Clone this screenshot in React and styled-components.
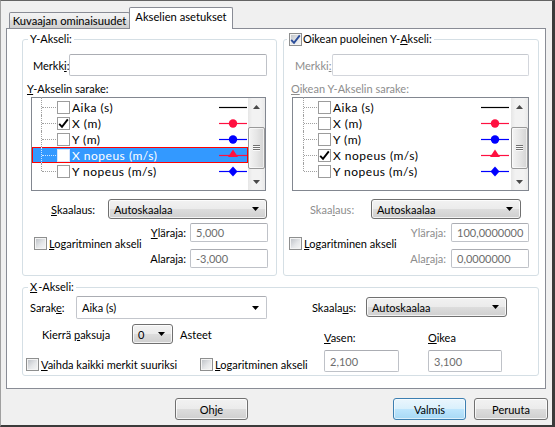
import React from 'react';
import styled, { createGlobalStyle, css } from 'styled-components';

const Global = createGlobalStyle`
  html, body { margin: 0; padding: 0; background: #f0f0f0; }
  body { font-family: Lato, "Liberation Sans", sans-serif; font-size: 11px; color: #000; }
  * { box-sizing: border-box; }
`;

const Window = styled.div`
  width: 555px;
  height: 427px;
  background: #f0f0f0;
  border-top: 1px solid #646464;
  border-left: 1px solid #a0a0a0;
  border-right: 3px solid #3b3b3b;
  border-bottom: 2px solid #3b3b3b;
  display: flex;
  flex-direction: column;
  overflow: hidden;
`;

const TabStrip = styled.div`
  height: 27px;
  display: flex;
  align-items: flex-end;
  padding-left: 8px;
`;

const Tab = styled.div`
  flex: none;
  width: ${p => p.$w}px;
  display: flex;
  justify-content: center;
  border: 1px solid #898c95;
  border-bottom: none;
  border-radius: 2px 2px 0 0;
  white-space: nowrap;
  font-size: 11.2px;
  ${p => p.$active
    ? css`
      height: 22px;
      margin-left: -1px;
      margin-bottom: -1px;
      padding-top: 2px;
      background: #fff;
      position: relative;
      z-index: 1;
    `
    : css`
      height: 16px;
      align-items: center;
      background: linear-gradient(#f3f3f3 0%, #ebebeb 50%, #dddddd 50%, #cfcfcf 100%);
    `}
`;

const Panel = styled.div`
  margin-left: 5px;
  width: 540px;
  height: 361px;
  border: 1px solid #898c95;
  background: #fff;
  padding: 3px 0 0 15px;
`;

const TopRow = styled.div`
  display: flex;
  gap: 6px;
`;

const Group = styled.fieldset`
  flex: none;
  width: ${p => p.$w}px;
  margin: ${p => p.$mt || 0}px 0 0;
  padding: 0 0 ${p => p.$pb || 0}px;
  border: 1px solid #d5dfe5;
  border-radius: 3px;
  min-width: 0;
`;

const Legend = styled.legend`
  margin-left: ${p => p.$ml}px;
  padding: 0 2px;
  height: 14px;
  line-height: 14px;
  display: flex;
  align-items: center;
  gap: 1px;
  white-space: nowrap;
`;

const U = styled.span`
  text-decoration: underline;
  text-underline-offset: 1px;
`;

const Row = styled.div`
  display: flex;
  align-items: center;
  height: ${p => p.$h}px;
  margin-top: ${p => p.$mt || 0}px;
  padding-right: ${p => p.$pr || 0}px;
`;

const Label = styled.span`
  flex: none;
  display: block;
  width: ${p => (p.$w ? `${p.$w}px` : 'auto')};
  margin-left: ${p => p.$ml || 0}px;
  margin-top: ${p => p.$mt || 0}px;
  color: ${p => (p.$disabled ? '#8d8d8d' : '#000')};
  text-align: ${p => (p.$right ? 'right' : 'left')};
  white-space: nowrap;
  line-height: 15px;
`;

const TextBox = styled.div`
  flex: ${p => (p.$w ? 'none' : '1')};
  width: ${p => (p.$w ? `${p.$w}px` : 'auto')};
  height: ${p => p.$h || 22}px;
  border: 1px solid ${p => (p.$disabled ? '#d3d6dc' : '#bfc2c8')};
  border-top-color: ${p => (p.$disabled ? '#c6c9cf' : '#abadb3')};
  border-radius: 2px;
  background: #fff;
  color: #6d6d6d;
  padding-left: 5px;
  display: flex;
  align-items: center;
  white-space: nowrap;
  overflow: hidden;
`;

const DropDown = styled.div`
  flex: none;
  width: ${p => p.$w}px;
  height: ${p => p.$h || 20}px;
  margin-left: ${p => p.$ml || 0}px;
  display: flex;
  align-items: center;
  justify-content: space-between;
  padding: 0 7px 0 5px;
  white-space: nowrap;
  ${p => p.$flat
    ? css`
      border: 1px solid #c3c6cc;
      border-top-color: #abadb3;
      border-radius: 2px;
      background: #fff;
    `
    : css`
      border: 1px solid #707070;
      border-radius: 3px;
      background: linear-gradient(#f2f2f2 0%, #ebebeb 50%, #dddddd 50%, #cfcfcf 100%);
      box-shadow: inset 0 0 0 1px rgba(255, 255, 255, 0.75);
    `}
`;

const Arrow = () => (
  <svg width="7" height="4" viewBox="0 0 7 4" style={{ flex: 'none' }}>
    <polygon points="0,0 7,0 3.5,4" fill="#000" />
  </svg>
);

const Box = styled.span`
  flex: none;
  width: 13px;
  height: 13px;
  display: inline-flex;
  align-items: center;
  justify-content: center;
  position: relative;
  ${p => p.$flat
    ? css`
      border: 1px solid ${p.$sel ? '#d6e6ff' : '#9c9c9c'};
      background: #fff;
    `
    : css`
      border: 1px solid #8e8f8f;
      background: linear-gradient(135deg, #b9bdc3 0%, #e4e6e8 55%, #f7f7f7 100%);
      box-shadow: inset 0 0 0 1px #f4f4f4;
    `}
`;

const Tick = ({ color }) => (
  <svg width="13" height="13" viewBox="0 0 13 13" style={{ position: 'absolute', left: -1, top: -1 }}>
    <path d="M2.2 6.8 L5 9.8 L10.8 2.4" fill="none" stroke={color} strokeWidth="1.9" strokeLinejoin="miter" />
  </svg>
);

const CheckBox = ({ checked, flat, sel, color = '#000' }) => (
  <Box $flat={flat} $sel={sel}>{checked && <Tick color={color} />}</Box>
);

const CheckLabel = styled.label`
  flex: none;
  display: flex;
  align-items: center;
  gap: 2px;
  width: ${p => (p.$w ? `${p.$w}px` : 'auto')};
  margin-left: ${p => p.$ml || 0}px;
  margin-top: ${p => p.$mt || 0}px;
  align-self: ${p => p.$self || 'auto'};
  white-space: nowrap;
  line-height: 15px;
`;

/* list box */
const ListBox = styled.div`
  width: ${p => p.$w}px;
  height: 94px;
  margin: 1px 0 0 ${p => p.$ml}px;
  border: 1px solid #828790;
  background: #fff;
  display: flex;
`;

const Items = styled.div`
  flex: 1;
  min-width: 0;
  display: flex;
  flex-direction: column;
  padding-top: 1px;
`;

const Item = styled.div`
  height: 16px;
  display: flex;
  align-items: center;
  white-space: nowrap;
  font-size: 12px;
  letter-spacing: 0.5px;
  ${p => p.$sel && css`
    background: #3399ff;
    color: #fff;
    outline: 1px solid #ff0000;
    outline-offset: -1px;
  `}
`;

const Stub = styled.span`
  flex: none;
  width: 25px;
  height: 16px;
  position: relative;
  &::before {
    content: '';
    position: absolute;
    left: ${p => p.$x}px;
    top: ${p => (p.$first ? -2 : 0)}px;
    height: ${p => (p.$last ? '8px' : p.$first ? '18px' : '16px')};
    border-left: 1px dotted ${p => (p.$sel ? '#cfe6ff' : '#a0a0a0')};
  }
  &::after {
    content: '';
    position: absolute;
    left: ${p => p.$x + 1}px;
    right: 1px;
    top: 8px;
    border-top: 1px dotted ${p => (p.$sel ? '#cfe6ff' : '#a0a0a0')};
  }
`;

const ItemText = styled.span`
  margin-left: 2px;
`;

const MarkerWrap = styled.span`
  margin-left: auto;
  margin-right: ${p => p.$mr}px;
  display: flex;
`;

const Marker = ({ color, shape }) => (
  <svg width="28" height="14" viewBox="0 0 28 14">
    <line x1="0" y1="7.5" x2="28" y2="7.5" stroke={color} strokeWidth="1.2" />
    {shape === 'circle' && <circle cx="14" cy="7.5" r="4.2" fill={color} />}
    {shape === 'tri' && <polygon points="14,1.5 19,9 9,9" fill={color} />}
    {shape === 'diamond' && <polygon points="14,2.5 18.5,7.5 14,12.5 9.5,7.5" fill={color} />}
  </svg>
);

const VScroll = styled.div`
  flex: none;
  width: 17px;
  display: flex;
  flex-direction: column;
  background: linear-gradient(90deg, #e6e6e6 0%, #f2f2f2 25%, #f2f2f2 75%, #e9e9e9 100%);
`;

const ScrollBtn = styled.div`
  flex: none;
  height: 17px;
  display: flex;
  align-items: center;
  justify-content: center;
`;

const Track = styled.div`
  flex: 1;
`;

const Thumb = styled.div`
  margin: 12px 0 0 0;
  height: 42px;
  border: 1px solid #9a9a9a;
  border-radius: 2px;
  background: linear-gradient(90deg, #f4f4f4 0%, #e6e6e6 50%, #d4d4d4 100%);
  box-shadow: inset 0 0 0 1px rgba(255, 255, 255, 0.6);
  display: flex;
  flex-direction: column;
  align-items: center;
  justify-content: center;
  gap: 0;
`;

const Grip = styled.span`
  width: 7px;
  height: 2px;
  border-top: 1px solid #707070;
  border-bottom: 1px solid #fafafa;
`;

const ScrollArrow = ({ up }) => (
  <svg width="7" height="4" viewBox="0 0 7 4">
    <polygon points={up ? '0,4 7,4 3.5,0' : '0,0 7,0 3.5,4'} fill="#4a4a4a" />
  </svg>
);

const RED = '#ff1040';
const BLUE = '#0000ff';

const ITEMS = [
  { name: 'Aika (s)', color: '#000', shape: null },
  { name: 'X (m)', color: RED, shape: 'circle' },
  { name: 'Y (m)', color: BLUE, shape: 'circle' },
  { name: 'X nopeus (m/s)', color: RED, shape: 'tri' },
  { name: 'Y nopeus (m/s)', color: BLUE, shape: 'diamond' },
];

const SeriesList = ({ w, ml, checkedIndex, selIndex, stubX, markerRight }) => (
  <ListBox $w={w} $ml={ml}>
    <Items>
      {ITEMS.map((it, i) => (
        <Item key={it.name} $sel={i === selIndex}>
          <Stub $x={stubX} $first={i === 0} $last={i === ITEMS.length - 1} $sel={i === selIndex} />
          <CheckBox flat checked={i === checkedIndex} sel={i === selIndex} />
          <ItemText>{it.name}</ItemText>
          <MarkerWrap $mr={markerRight}>
            <Marker color={it.color} shape={it.shape} />
          </MarkerWrap>
        </Item>
      ))}
    </Items>
    <VScroll>
      <ScrollBtn><ScrollArrow up /></ScrollBtn>
      <Track>
        <Thumb>
          <Grip />
          <Grip />
          <Grip />
        </Thumb>
      </Track>
      <ScrollBtn><ScrollArrow /></ScrollBtn>
    </VScroll>
  </ListBox>
);

const LimitsBlock = styled.div`
  display: flex;
  margin-top: 4px;
  padding-right: ${p => p.$pr}px;
`;

const LimitsGrid = styled.div`
  margin-left: auto;
  display: grid;
  grid-template-columns: auto ${p => p.$iw}px;
  column-gap: ${p => p.$gap}px;
  row-gap: 7px;
  align-items: center;
`;

const XBody = styled.div`
  display: flex;
`;

const XCol = styled.div`
  flex: none;
  width: ${p => (p.$w ? `${p.$w}px` : 'auto')};
  display: flex;
  flex-direction: column;
`;

const BoundsGrid = styled.div`
  display: grid;
  grid-template-columns: 75px 74px;
  column-gap: 29px;
  row-gap: 5px;
  margin: 13px 0 0 24px;
`;

const ButtonRow = styled.div`
  display: flex;
  margin-top: 9px;
  padding-left: 174px;
`;

const Button = styled.div`
  flex: none;
  width: ${p => p.$w}px;
  height: 22px;
  margin-left: ${p => p.$ml || 0}px;
  display: flex;
  align-items: center;
  justify-content: center;
  border-radius: 3px;
  ${p => p.$default
    ? css`
      border: 1px solid #3c7fb1;
      background: linear-gradient(#eaf6fd 0%, #d9f0fc 50%, #bee6fd 50%, #a7d9f5 100%);
      box-shadow: inset 0 0 0 1px rgba(255, 255, 255, 0.6);
    `
    : css`
      border: 1px solid #707070;
      background: linear-gradient(#f2f2f2 0%, #ebebeb 50%, #dddddd 50%, #cfcfcf 100%);
      box-shadow: inset 0 0 0 1px rgba(255, 255, 255, 0.75);
    `}
`;

export default function App() {
  return (
    <>
      <Global />
      <Window>
        <TabStrip>
          <Tab $w={121}>Kuvaajan ominaisuudet</Tab>
          <Tab $w={104} $active>Akselien asetukset</Tab>
        </TabStrip>
        <Panel>
          <TopRow>
            <Group $w={255} $pb={7}>
              <Legend $ml={5}>Y-Akseli:</Legend>
              <Row $h={22} $mt={8} $pr={9}>
                <Label $ml={10} $w={36}>Merkk<U>i</U>:</Label>
                <TextBox />
              </Row>
              <Label $ml={4} $mt={5}><U>Y</U>-Akselin sarake:</Label>
              <SeriesList w={235} ml={8} checkedIndex={1} selIndex={3} stubX={9} markerRight={1} />
              <Row $h={20} $mt={8}>
                <Label $ml={28} $w={57}><U>S</U>kaalaus:</Label>
                <DropDown $w={159}>Autoskaalaa<Arrow /></DropDown>
              </Row>
              <LimitsBlock $pr={8}>
                <CheckLabel $ml={11} $self="center" $mt={-5}>
                  <CheckBox />
                  <span><U>L</U>ogaritminen akseli</span>
                </CheckLabel>
                <LimitsGrid $iw={78} $gap={4}>
                  <Label $right><U>Y</U>läraja:</Label>
                  <TextBox $w={78} $h={19}>5,000</TextBox>
                  <Label $right>Alara<U>j</U>a:</Label>
                  <TextBox $w={78} $h={19}>-3,000</TextBox>
                </LimitsGrid>
              </LimitsBlock>
            </Group>

            <Group $w={256} $pb={7}>
              <Legend $ml={3}>
                <CheckBox checked color="#2b4d9a" />
                <span>Oikean puoleinen Y-<U>A</U>kseli:</span>
              </Legend>
              <Row $h={22} $mt={8} $pr={9}>
                <Label $ml={11} $w={37} $disabled>Merkki<U>:</U></Label>
                <TextBox $disabled />
              </Row>
              <Label $ml={7} $mt={5} $disabled><U>O</U>ikean Y-Akselin sarake:</Label>
              <SeriesList w={237} ml={8} checkedIndex={3} selIndex={-1} stubX={10} markerRight={2} />
              <Row $h={20} $mt={8}>
                <Label $ml={26} $w={61} $disabled>Skaa<U>l</U>aus:</Label>
                <DropDown $w={150}>Autoskaalaa<Arrow /></DropDown>
              </Row>
              <LimitsBlock $pr={9}>
                <CheckLabel $ml={5} $self="center" $mt={-5}>
                  <CheckBox />
                  <span><U>L</U>ogaritminen akseli</span>
                </CheckLabel>
                <LimitsGrid $iw={78} $gap={5}>
                  <Label $right $disabled>Ylära<U>j</U>a:</Label>
                  <TextBox $w={78} $h={19}>100,0000000</TextBox>
                  <Label $right $disabled>Ala<U>r</U>aja:</Label>
                  <TextBox $w={78} $h={19}>0,0000000</TextBox>
                </LimitsGrid>
              </LimitsBlock>
            </Group>
          </TopRow>

          <Group $w={517} $mt={4} $pb={3}>
            <Legend $ml={5}><U>X</U>-Akseli:</Legend>
            <XBody>
              <XCol $w={277}>
                <Row $h={23} $mt={2}>
                  <Label $ml={7} $w={46}>Sarak<U>e</U>:</Label>
                  <DropDown $flat $w={191} $h={23}>Aika (s)<Arrow /></DropDown>
                </Row>
                <Row $h={20} $mt={5}>
                  <Label $ml={19} $w={90}>Kierrä <U>p</U>aksuja</Label>
                  <DropDown $w={41}>0<Arrow /></DropDown>
                  <Label $ml={7}>Asteet</Label>
                </Row>
                <Row $h={15} $mt={13}>
                  <CheckLabel $ml={3} $w={174}>
                    <CheckBox />
                    <span><U>V</U>aihda kaikki merkit suuriksi</span>
                  </CheckLabel>
                  <CheckLabel>
                    <CheckBox />
                    <span><U>L</U>ogaritminen akseli</span>
                  </CheckLabel>
                </Row>
              </XCol>
              <XCol>
                <Row $h={20} $mt={3}>
                  <Label $ml={12} $w={54}>Skaala<U>u</U>s:</Label>
                  <DropDown $w={141}>Autoskaalaa<Arrow /></DropDown>
                </Row>
                <BoundsGrid>
                  <Label><U>V</U>asen:</Label>
                  <Label><U>O</U>ikea</Label>
                  <TextBox $w={75}>2,100</TextBox>
                  <TextBox $w={74}>3,100</TextBox>
                </BoundsGrid>
              </XCol>
            </XBody>
          </Group>
        </Panel>
        <ButtonRow>
          <Button $w={73}>Ohje</Button>
          <Button $w={73} $ml={145} $default>Valmis</Button>
          <Button $w={74} $ml={8}>Peruuta</Button>
        </ButtonRow>
      </Window>
    </>
  );
}
